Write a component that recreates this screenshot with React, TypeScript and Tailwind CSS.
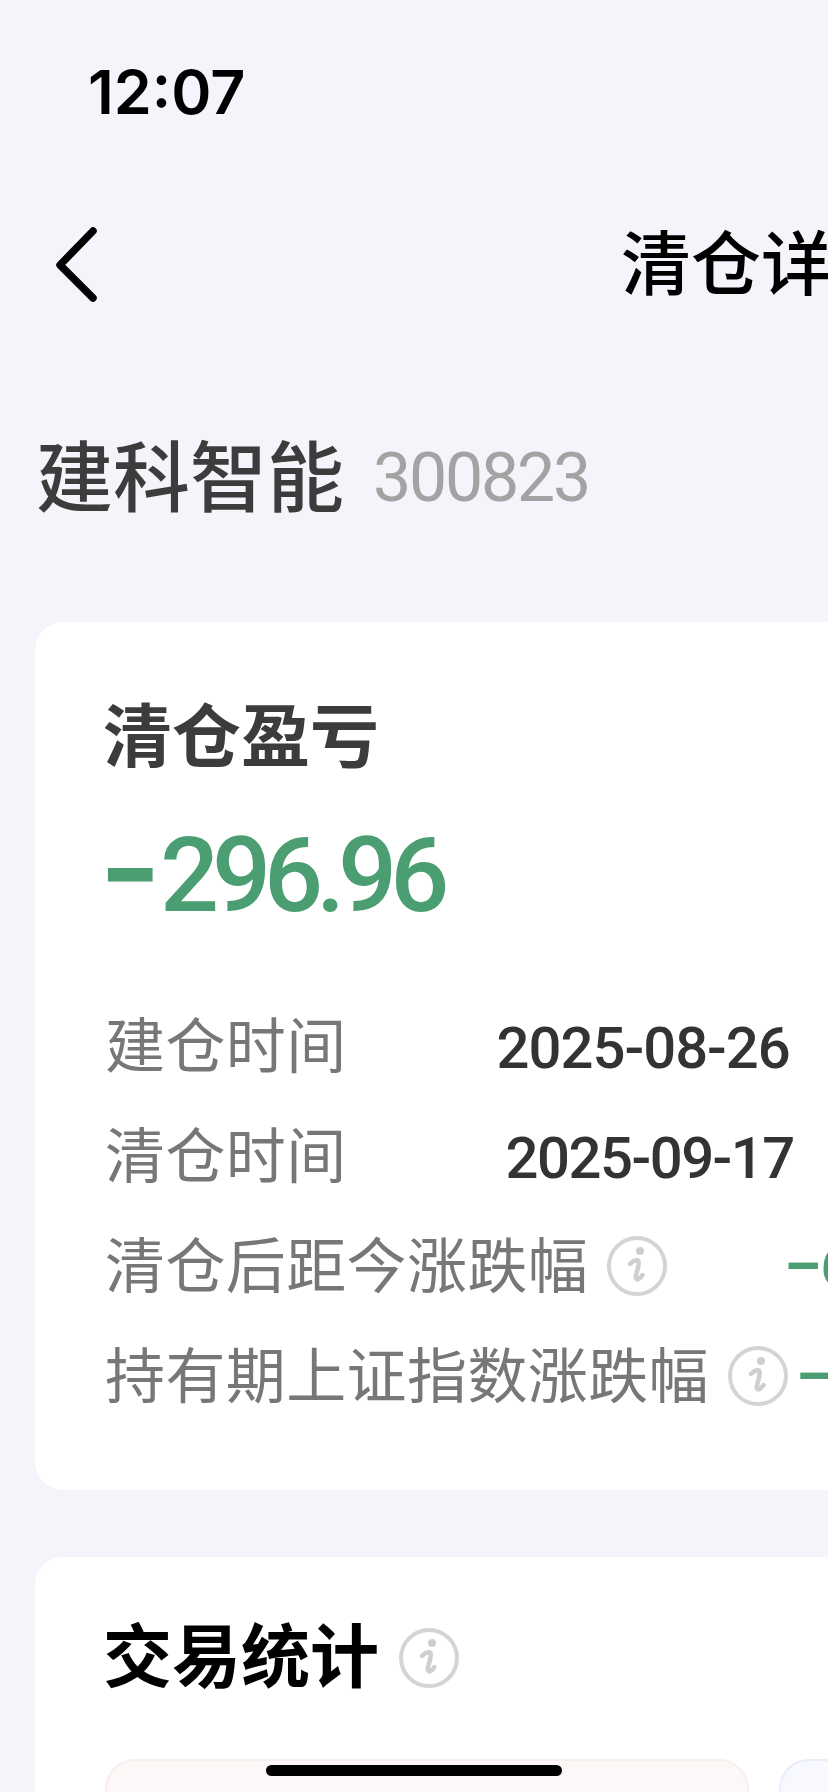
const cjk = "font-['Inter','Noto_Sans_CJK_SC',sans-serif]";

function InfoIcon({ className }: { className: string }) {
  return (
    <svg viewBox="0 0 60 60" className={className} fill="none">
      <circle cx="30" cy="30" r="28" stroke="#d4d4d4" strokeWidth="4" />
      <circle cx="33" cy="15" r="4" fill="#cfcfcf" />
      <path d="M23 28c3-3 6-4 8-3.500 2 .8-.5 9-2 15-.8 3 .5 4.500 2.500 3.500 1.500-.8 3-2.500 4-4" stroke="#cfcfcf" strokeWidth="4.500" strokeLinecap="round" />
    </svg>
  );
}

function Row({ label, info, offset, value, className }: { label: string; info?: boolean; offset: string; value: string; className: string }) {
  return (
    <div className="flex h-[110px] items-center">
      <span className="text-[60px] leading-none tracking-[0.4px] text-[#777777]">{label}</span>
      {info && <InfoIcon className="ml-[19px] h-[60px] w-[60px] shrink-0" />}
      <span className={`${offset} font-['Roboto',sans-serif] text-[58px] whitespace-nowrap ${className}`}>{value}</span>
    </div>
  );
}

export default function App() {
  return (
    <div className={`relative h-[1792px] w-[828px] overflow-hidden bg-[#f3f5fb] ${cjk}`}>
      <div className="w-[1522px]">
        <div className="h-[180px] pl-[88px] pt-[56px] font-['Inter',sans-serif] text-[61px] font-semibold leading-[72px] text-black">12:07</div>
        <div className="relative flex h-[170px] items-center justify-center">
          <svg viewBox="0 0 48 78" className="absolute left-[52px] top-[46px] h-[78px] w-[48px]" fill="none">
            <path d="M41 5 8 39l33 33" stroke="#000" strokeWidth="7.500" strokeLinecap="round" strokeLinejoin="round" />
          </svg>
          <span className="text-[70px] font-medium leading-none text-black">清仓详情</span>
        </div>
        <div className="flex h-[272px] items-start pl-[36px] pt-[90px]">
          <span className="text-[77px] font-medium leading-none text-[#3c3c3c]">建科智能</span>
          <span className="ml-[29px] mt-[4px] font-['Roboto',sans-serif] text-[68px] leading-none tracking-[-2.200px] text-[#a3a3a3]">300823</span>
        </div>
        <div className="mx-[35px] h-[868px] rounded-[28px] bg-white pl-[70px] pt-[81px]">
          <div className="-ml-[2px] text-[69px] font-bold leading-none text-[#3c3c3c]">清仓盈亏</div>
          <div className="-ml-[4px] mt-[52px] font-['Roboto',sans-serif] text-[104px] font-medium leading-none tracking-[-7px] text-[#4a9e71]">
            <span className="mr-[9px] font-black">−</span>296.96
          </div>
          <div className="mt-[63px]">
            <Row label="建仓时间" offset="ml-[150px] pt-[4px]" value="2025-08-26" className="font-medium tracking-[-1px] text-[#333333]" />
            <Row label="清仓时间" offset="ml-[159px] pt-[4px]" value="2025-09-17" className="font-medium tracking-[-1.500px] text-[#333333]" />
            <Row label="清仓后距今涨跌幅" info offset="ml-[117px]" value="–6.21%" className="font-bold text-[#4a9e71]" />
            <Row label="持有期上证指数涨跌幅" info offset="ml-[8px]" value="–1.05%" className="font-bold text-[#4a9e71]" />
          </div>
        </div>
        <div className="mx-[35px] mt-[67px] h-[500px] rounded-[28px] bg-white pl-[70px] pt-[66px]">
          <div className="-ml-[2px] flex items-center">
            <span className="text-[69px] font-bold leading-none text-black">交易统计</span>
            <InfoIcon className="ml-[20px] h-[60px] w-[60px]" />
          </div>
          <div className="mt-[67px] flex gap-[30px]">
            <div className="h-[300px] w-[644px] rounded-[30px] border-2 border-[#f9eded] bg-[#fdf8f8]" />
            <div className="h-[300px] w-[644px] rounded-[30px] border-2 border-[#e9eefb] bg-[#f8f9fe]" />
          </div>
        </div>
      </div>
      <div className="absolute bottom-[16px] left-[266px] h-[11px] w-[296px] rounded-full bg-black" />
    </div>
  );
}
